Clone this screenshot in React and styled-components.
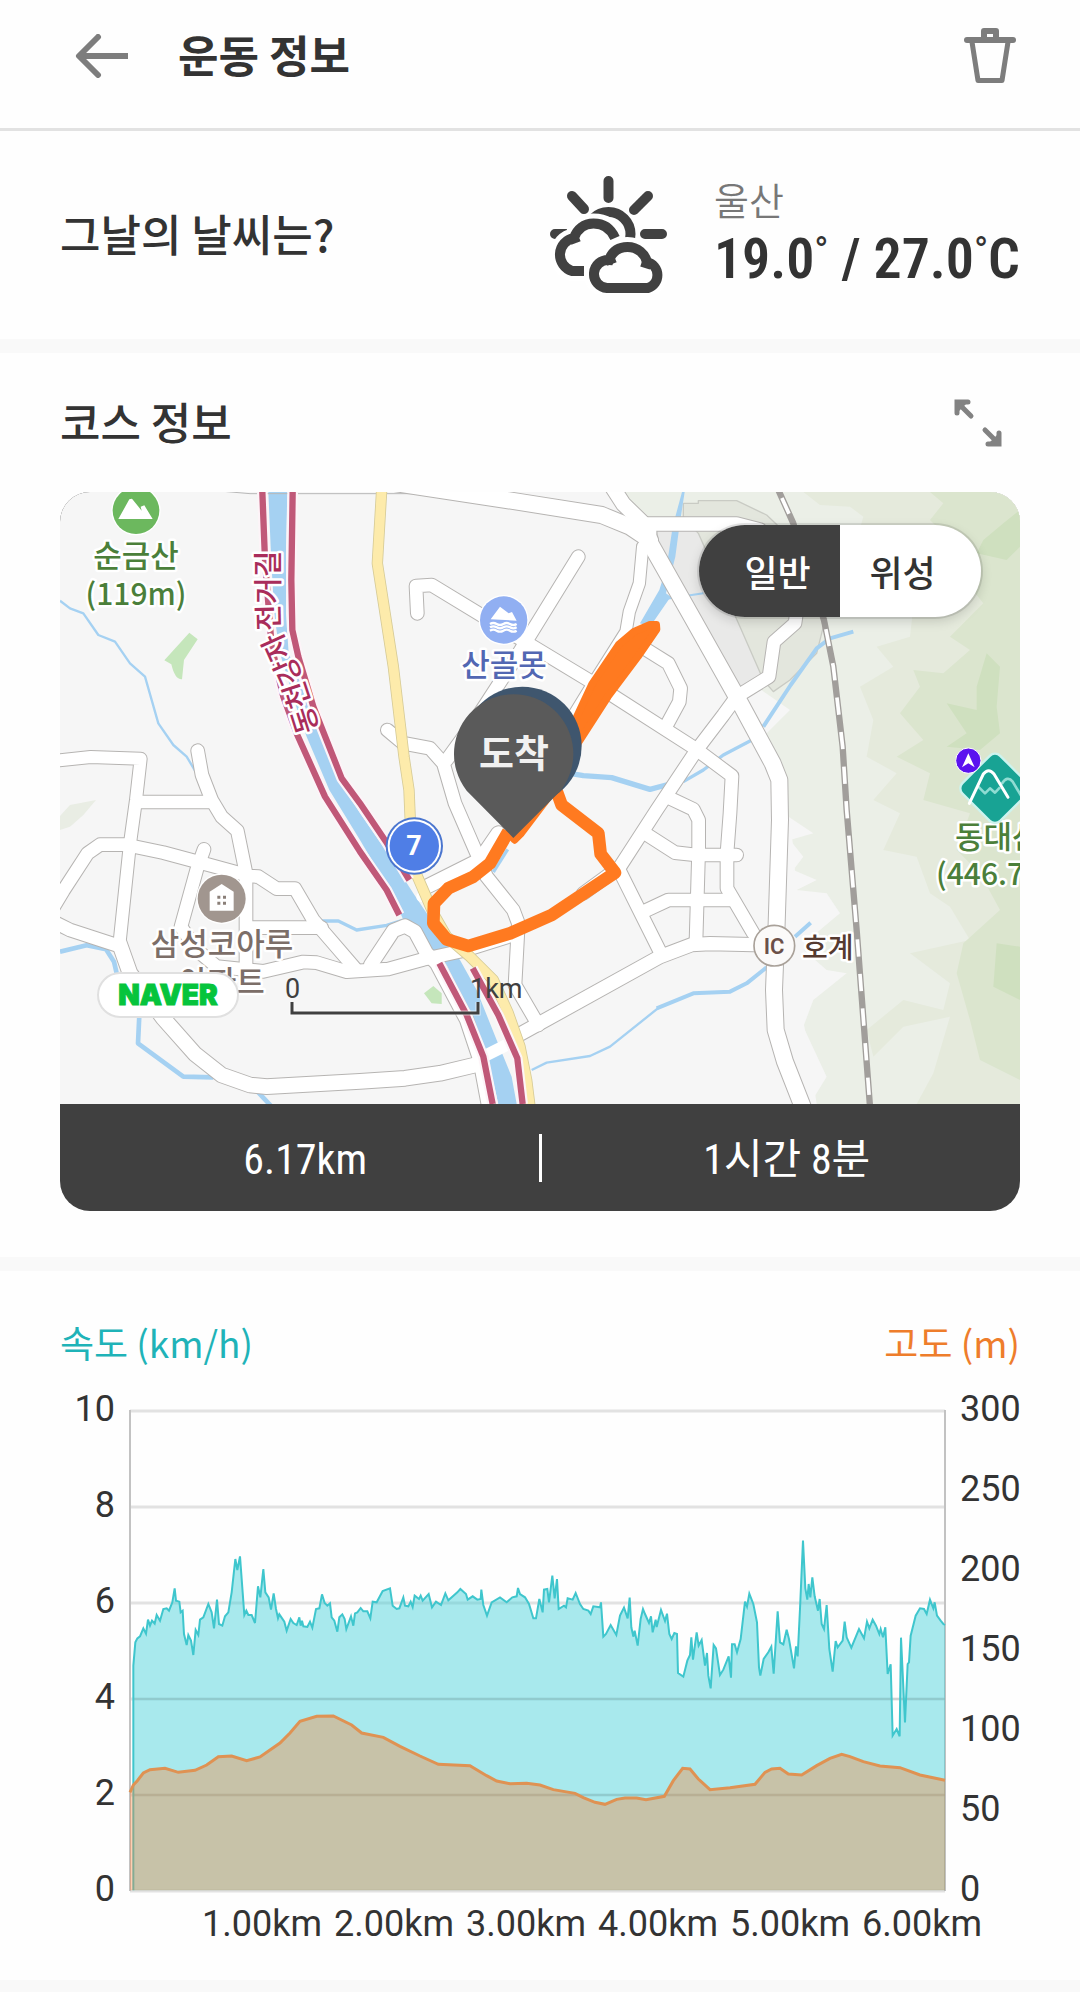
import React, { useState } from "react";
import styled, { createGlobalStyle, css } from "styled-components";

const sans = `"Noto Sans CJK KR", "Noto Sans", sans-serif`;
const narrow = `"Roboto Condensed", "Noto Sans CJK KR", sans-serif`;

const GlobalStyle = createGlobalStyle`
  *, *::before, *::after { box-sizing: border-box; }
  body { margin: 0; background: #fefefe; color: #333; font-family: ${sans}; }
  h1, h2, p { margin: 0; }
  button { margin: 0; border: 0; padding: 0; background: none; font: inherit; color: inherit; cursor: pointer; }
`;

const Page = styled.div`
  display: flex;
  flex-direction: column;
  min-height: 100vh;
`;

const Header = styled.header`
  display: flex;
  align-items: center;
  height: 131px;
  padding: 0 48px 16px 60px;
  border-bottom: 3px solid #e2e2e2;
`;

const IconButton = styled.button`
  display: flex;
  align-items: center;
  justify-content: center;
  width: 84px;
  height: 84px;
`;

const PageTitle = styled.h1`
  flex: 1;
  padding: 0 0 4px 34px;
  font-size: 44px;
  font-weight: 700;
  line-height: 64px;
`;

const SectionTitle = styled.h2`
  padding-bottom: 4px;
  font-size: 44px;
  font-weight: 500;
  line-height: 64px;
`;

const Band = styled.div`
  height: 14px;
  background: #f9f9f9;
`;

const Filler = styled(Band)`
  flex: 1;
  height: auto;
`;

const WeatherSection = styled.section`
  display: flex;
  align-items: center;
  justify-content: space-between;
  height: 208px;
  padding: 0 60px;
`;

const Weather = styled.div`
  display: flex;
  align-items: center;
  gap: 46px;
`;

const Readings = styled.div`
  padding-bottom: 8px;
`;

const City = styled.p`
  font-size: 38px;
  font-weight: 350;
  line-height: 56px;
  color: #777;
`;

const Temperature = styled.p`
  font-family: ${narrow};
  font-size: 56px;
  font-weight: 600;
  line-height: 64px;
  white-space: nowrap;
`;

const Degree = styled.span`
  font-size: 38px;
  font-weight: 400;
  line-height: 0;
  vertical-align: 14px;
`;

const CourseSection = styled.section`
  padding: 0 60px 46px;
`;

const SectionHead = styled.div`
  display: flex;
  align-items: center;
  justify-content: space-between;
  height: 139px;
`;

const MapCard = styled.div`
  overflow: hidden;
  border-radius: 30px;
  background: #404040;
`;

const MapView = styled.div`
  position: relative;
  aspect-ratio: 960 / 612;
  background: #f6f6f6;
`;

const Drawing = styled.svg`
  display: block;
  width: 100%;
  height: auto;
`;

const MapToggle = styled.div`
  position: absolute;
  top: 33px;
  right: 39px;
  display: flex;
  width: 282px;
  height: 92px;
  overflow: hidden;
  border-radius: 46px;
  background: #fff;
  box-shadow: 0 0 0 2px rgba(0, 0, 0, 0.1), 0 4px 12px rgba(0, 0, 0, 0.16);
`;

const ToggleOption = styled.button`
  flex: 1;
  font-size: 36px;
  font-weight: 500;
  line-height: 52px;
  color: #333;
  ${(p) =>
    p.$active
      ? css`
          background: #404040;
          color: #fff;
          padding-left: 16px;
        `
      : css`
          padding-right: 16px;
        `}
`;

const Attribution = styled.div`
  position: absolute;
  left: 37px;
  bottom: 86px;
  display: flex;
  align-items: center;
  justify-content: center;
  width: 142px;
  height: 46px;
  border: 2px solid #e0e0e0;
  border-radius: 23px;
  background: #fff;
  font-family: Inter, sans-serif;
  font-size: 28px;
  font-weight: 900;
  line-height: 32px;
  color: #06c43c;
  -webkit-text-stroke: 1px #06c43c;
`;

const Summary = styled.div`
  display: flex;
  align-items: center;
  height: 107px;
  color: #fff;
`;

const SummaryValue = styled.p`
  flex: 1;
  padding: 4px 0 0 12px;
  text-align: center;
  font-family: ${narrow};
  font-size: 42px;
  font-weight: 400;
  line-height: 60px;
`;

const Divider = styled.span`
  width: 3px;
  height: 48px;
  background: #fff;
`;

const ChartSection = styled.section`
  padding: 34px 60px 31px;
`;

const ChartHead = styled.div`
  display: flex;
  justify-content: space-between;
`;

const SeriesName = styled.p`
  font-size: 37px;
  font-weight: 400;
  line-height: 74px;
  color: ${(p) => p.$color};
`;

const AxisText = styled.text`
  font-family: Roboto, sans-serif;
  font-size: 36px;
  fill: #333;
`;

const PlaceText = styled.text`
  font-family: ${sans};
  font-size: ${(p) => p.$size || 31}px;
  font-weight: ${(p) => p.$weight || 500};
  fill: ${(p) => p.$color};
  stroke: #fff;
  stroke-width: ${(p) => (p.$plain ? 0 : 5)}px;
  stroke-linejoin: round;
  paint-order: stroke;
`;

const BadgeText = styled.text`
  font-family: Roboto, sans-serif;
  font-size: ${(p) => p.$size}px;
  font-weight: ${(p) => p.$weight};
  fill: ${(p) => p.$color};
`;

/* Map geometry is kept on a grid of three units to a pixel. */
const roads = [
  { w: 36, d: "M20 842L122 831L272 836L258 960L240 1090L208 1395" },
  { w: 44, d: "M208 1390L240 1480L340 1615L435 1722L515 1785L600 1815L650 1820L930 1804L1065 1795L1170 1780L1275 1755" },
  { w: 38, d: "M262 966L475 966" },
  { w: 38, d: "M443 812L456 885L485 960L515 1010L562 1052L588 1180L588 1455" },
  { w: 38, d: "M5 1290L40 1232L113 1120L150 1094L225 1094L340 1118L460 1150L600 1188L625 1190L680 1226L735 1226L790 1320L915 1465" },
  { w: 38, d: "M0 1320L60 1350L205 1397" },
  { w: 38, d: "M462 1108L440 1170L393 1340L440 1410L500 1460L640 1474L760 1446L800 1448L890 1475L1015 1467L1120 1438L1240 1412L1390 1365" },
  { w: 38, d: "M600 1343L815 1343" },
  { w: 40, d: "M962 1455L1030 1352L1065 1338L1095 1355L1130 1420L1160 1450L1250 1620L1290 1740L1318 1890" },
  { w: 48, d: "M1000 4L1370 60L1655 105L1740 140L1800 180" },
  { w: 44, d: "M1680 10L1720 72L1795 145" },
  { w: 40, d: "M1795 132L2060 132L2130 150" },
  { w: 48, d: "M1795 150L1795 180L1925 410L2060 650L2168 850L2188 900L2190 1020L2180 1330L2172 1530L2177 1650L2205 1745L2262 1890" },
  { w: 38, d: "M2240 395L2235 430L2172 485L2157 590L2060 650L2020 705L1940 810L1820 990L1710 1160L1600 1240" },
  { w: 34, d: "M1778 200L1768 310L1738 395L1728 455L1630 610L1550 740L1450 900" },
  { w: 38, d: "M1585 230L1400 530L1270 730L1190 840" },
  { w: 38, d: "M1102 400L1098 318L1145 315L1430 488L1620 603L1935 805L2046 888L2040 1000L2031 1120L2031 1225L2110 1360" },
  { w: 38, d: "M1850 950L1930 988L1946 1020L1946 1110L1938 1385" },
  { w: 38, d: "M1785 1060L1875 1118L1940 1125L2060 1125" },
  { w: 38, d: "M1780 1295L1855 1260L1930 1260L2040 1260" },
  { w: 40, d: "M1400 1668L1830 1430L1925 1394L1980 1391L2150 1395" },
  { w: 38, d: "M1775 500L1855 550L1892 625L1888 665L1845 745" },
  { w: 38, d: "M1705 1165L1835 1425" },
  { w: 38, d: "M1012 750L1060 790L1140 805L1180 850L1215 970L1280 1120L1310 1190L1390 1290L1405 1330L1395 1515L1465 1635" },
  { w: 42, d: "M1345 1060L1290 1140L1130 1220" },
];

const streams = [
  { w: 7, d: "M30 362L60 385L100 400L145 465L195 485L240 550L285 590L325 730L370 795L410 830L435 872" },
  { w: 14, d: "M30 1415L110 1396L168 1408L192 1445L200 1480M268 1605L264 1690L400 1790L490 1792M620 1832L665 1880" },
  { w: 10, d: "M815 1323L865 1323L920 1350L1010 1336L1060 1320" },
  { w: 16, d: "M1560 880L1600 887L1685 893L1800 928L1860 912" },
  { w: 10, d: "M1900 905L1960 870L2020 825L2110 778" },
  { w: 12, d: "M2140 740L2222 615L2300 505L2340 475L2410 455" },
  { w: 6, d: "M1840 358L1960 340" },
  { w: 7, d: "M1445 1770L1490 1748L1620 1728L1680 1700L1830 1580" },
  { w: 12, d: "M1820 1585L1930 1540L2040 1535L2090 1510L2150 1462M2235 1370L2282 1328" },
];

const highway =
  "M995 30L982 250L1030 560L1062 830L1077 930L1082 1050L1098 1180L1150 1300L1190 1370L1260 1430L1330 1500L1375 1600L1410 1700L1430 1800L1440 1880";

const railway = "M2185 30L2230 130L2322 420L2350 560L2378 800L2390 990L2420 1350L2460 1880";

const cyclePaths = [
  "M728 36L724 300L727 450L745 530L790 680L875 895L930 970L1008 1085L1078 1200",
  "M637 36L645 240L665 500L700 650L742 765L825 950L930 1115L1010 1230L1048 1305",
  "M1168 1450L1250 1605L1300 1730L1328 1872",
  "M1268 1465L1345 1605L1402 1735L1418 1872",
];

const speedLine =
  "250,860 256,790 262,778 270,772 280,748 288,764 294,722 300,740 306,725 314,734 320,708 330,725 340,690 350,688 357,695 367,670 374,628 378,665 388,668 392,700 398,695 402,765 410,798 415,768 423,785 430,828 437,753 445,768 450,722 460,715 475,675 485,700 492,748 501,662 507,735 517,740 525,712 535,700 545,640 556,540 562,573 570,532 578,640 583,708 589,695 595,708 605,708 615,732 624,622 631,655 640,570 646,640 656,655 663,692 671,643 678,690 684,718 688,706 703,728 710,755 722,720 730,732 740,738 748,715 752,740 756,725 760,742 772,744 780,728 787,746 798,690 808,688 816,646 824,672 832,680 840,673 845,715 853,725 862,758 868,715 877,706 884,720 889,750 903,712 910,740 915,703 922,700 932,687 940,697 952,697 961,718 968,668 980,670 998,636 1020,628 1028,680 1040,690 1048,688 1060,655 1065,680 1075,682 1082,668 1088,684 1094,650 1107,660 1112,650 1118,665 1136,645 1146,685 1158,668 1173,678 1186,643 1195,664 1222,640 1231,630 1248,645 1253,662 1268,652 1282,662 1292,660 1294,632 1300,678 1311,710 1325,670 1350,655 1370,670 1387,655 1400,652 1404,627 1410,645 1425,655 1437,675 1450,718 1458,718 1468,660 1478,700 1482,632 1492,630 1497,670 1507,590 1514,658 1521,600 1526,690 1542,680 1548,685 1553,658 1568,662 1577,642 1590,675 1600,690 1615,695 1622,705 1630,682 1650,685 1653,670 1660,773 1668,765 1682,738 1699,768 1710,710 1722,686 1733,718 1739,656 1744,745 1750,773 1754,755 1763,800 1772,720 1779,690 1785,705 1797,732 1803,712 1808,760 1817,722 1820,744 1833,693 1845,726 1851,704 1858,765 1865,780 1873,762 1881,765 1884,882 1900,893 1912,845 1920,828 1924,775 1929,842 1940,760 1946,800 1955,783 1965,860 1971,822 1975,890 1982,928 1991,798 1998,808 2010,888 2020,872 2036,832 2043,896 2046,796 2054,796 2061,820 2072,780 2085,668 2091,683 2098,644 2110,675 2121,730 2127,865 2131,890 2141,840 2155,820 2164,803 2171,884 2183,697 2190,790 2200,796 2210,752 2217,780 2232,868 2238,802 2243,832 2250,690 2259,485 2266,628 2272,662 2276,615 2281,655 2287,595 2294,652 2304,695 2309,660 2315,735 2322,750 2330,678 2338,810 2348,878 2357,786 2363,805 2378,785 2384,728 2390,775 2404,806 2427,750 2442,778 2451,728 2458,748 2468,722 2478,740 2488,765 2492,750 2499,775 2506,745 2513,885 2522,856 2528,1070 2540,1050 2549,1072 2553,776 2565,1030 2573,855 2577,850 2582,770 2597,710 2610,688 2622,690 2630,705 2640,662 2650,688 2654,670 2661,710 2672,725 2680,735 2685,738";

const elevationLine =
  "240,1240 250,1218 262,1205 280,1182 300,1172 345,1168 385,1180 435,1174 470,1158 505,1133 545,1131 590,1145 630,1134 690,1092 720,1062 750,1027 800,1012 850,1011 905,1038 935,1062 1000,1075 1050,1102 1110,1131 1165,1156 1260,1160 1310,1190 1340,1206 1380,1214 1430,1213 1470,1218 1510,1232 1575,1243 1600,1256 1635,1270 1665,1276 1700,1261 1725,1257 1760,1257 1788,1262 1843,1252 1870,1205 1898,1168 1920,1170 1945,1200 1980,1232 2040,1226 2115,1216 2145,1180 2165,1170 2190,1168 2215,1185 2255,1188 2300,1160 2340,1138 2375,1126 2400,1133 2440,1148 2490,1161 2550,1166 2610,1188 2685,1204";

const BackIcon = () => (
  <svg width="54" height="44" viewBox="0 0 54 44" fill="none" stroke="#7d7d7d" strokeWidth="6" aria-hidden="true">
    <path d="M53 22H6" />
    <path d="M23 3L4 22L23 41" strokeLinecap="round" strokeLinejoin="round" strokeWidth="6" />
  </svg>
);

const TrashIcon = () => (
  <svg width="52" height="56" viewBox="0 0 52 56" fill="none" stroke="#7d7d7d" aria-hidden="true">
    <path d="M3 12H49" strokeWidth="6" strokeLinecap="round" />
    <path d="M20 11V3H32V11" strokeWidth="6" strokeLinejoin="round" />
    <path d="M8 14L14 52.500H38L44 14" strokeWidth="5" strokeLinejoin="round" />
  </svg>
);

const ExpandIcon = () => (
  <svg width="48" height="48" viewBox="0 0 48 48" fill="none" stroke="#828282" strokeWidth="5" strokeLinecap="round" aria-hidden="true">
    <path d="M3 14V3H14M4 4L17 17M45 34V45H34M44 44L31 31" />
    <path d="M2 2H15L2 15ZM46 46H33L46 33Z" fill="#828282" stroke="none" />
  </svg>
);

const WeatherIcon = () => (
  <svg width="118" height="118" viewBox="0 0 118 118" fill="none" stroke="#414141" strokeWidth="10" role="img" aria-label="구름 많음">
    <g strokeLinecap="round">
      <path d="M58.500 5V22M22 20L34 33M98 20L84 34M95 58H112M5 58H20" />
    </g>
    <circle cx="58.500" cy="58" r="22" />
    <path d="M34 95H22A17 17 0 0 1 24 62C27 53 34 47.500 43.500 47.500C54 47.500 61 52 65 61L66 95Z" fill="#fff" stroke="#fff" strokeWidth="20" />
    <path d="M34 95H22A17 17 0 0 1 24 62C27 53 34 47.500 43.500 47.500C54 47.500 61 53 65 62M24 62L26 67" />
    <path d="M57 112A14 14 0 0 1 59 84C62 76 68 71 77.500 71C88 71 95 78 97 86A13.500 13.500 0 0 1 98 112Z" fill="#fff" stroke="#fff" strokeWidth="20" />
    <path d="M57 112A14 14 0 0 1 59 84C62 76 68 71 77.500 71C88 71 95 78 97 86A13.500 13.500 0 0 1 98 112Z" fill="#fff" />
    <path d="M60 83L62 88M97 86L95 92" />
  </svg>
);

const Terrain = () => (
  <g>
    <path fill="#ebefe7" d="M1710 36H2910V1872H2300L2275 1700L2255 1600L2290 1500L2250 1440L2290 1330L2240 1250L2230 1100L2200 900L2150 760L2220 690L2120 620L1900 200Z" />
    <path fill="#f6f6f6" d="M2200 1000L2290 1060L2220 1080L2260 1130L2230 1170L2300 1200L2240 1230L2330 1240L2370 1300L2250 1400L2330 1470L2390 1480L2290 1560L2260 1640L2330 1790L2280 1872H2190Z" />
    <path fill="#e5eadc" d="M2260 36L2310 75L2400 80L2440 110L2400 250L2480 350L2590 380L2580 470L2480 500L2530 560L2430 620L2470 720L2450 830L2540 880L2470 960L2550 1000L2500 1110L2600 1130L2640 1240L2700 1280L2760 1380L2580 1420L2700 1510L2680 1590L2560 1560L2450 1650L2470 1730L2560 1640L2700 1610L2650 1780L2600 1872H2910V36Z" />
    <path fill="#dbe5ce" d="M2640 36L2680 70L2640 120L2700 180L2770 200L2760 320L2800 370L2700 470L2760 510L2680 580L2590 570L2610 620L2550 700L2620 780L2540 830L2640 880L2620 960L2760 1000L2720 1110L2790 1180L2850 1290L2740 1390L2720 1480L2760 1620L2790 1740L2910 1800V36Z" />
    <path fill="#cfe0bf" d="M2910 90L2860 130L2800 180L2780 220L2870 240L2910 200ZM2810 520L2780 620L2780 690L2690 670L2750 760L2690 800L2790 810L2850 760L2840 680L2850 560ZM2840 1390L2830 1520L2910 1560V1400Z" />
    <path fill="#e9e9e8" stroke="#cfcfcd" strokeWidth="3" d="M1820 150L2070 150L2240 240L2240 430L2140 600L2070 630L1830 210Z" />
    <path fill="#e3e6dd" stroke="#c9cbc4" strokeWidth="4" d="M1900 70H1945V62L2060 62L2150 105L2250 200L2320 440L2300 520L2220 600L2170 635L2140 600L2070 440L1945 160L1900 110Z" />
    <path fill="#c5e6bb" d="M418 458L443 478L402 540L396 598Q375 600 364 553L343 541Z" />
    <path fill="#c5e6bb" d="M1122 1540L1150 1518L1175 1540V1572L1145 1570Z" />
    <path fill="#e9ede4" d="M30 1008L60 975L138 960L100 1005L60 1040L30 1050Z" />
  </g>
);

const MapDrawing = () => (
  <Drawing viewBox="0 0 960 612" role="img" aria-label="코스 지도">
    <defs>
      <path id="bikeway" d="M259 238C250 212 246 192 234 168C226 152 219 140 219 124L219 36" />
    </defs>
    <g transform="scale(0.33333) translate(-30 -36)" fill="none" strokeLinejoin="round">
      <Terrain />
      {streams.map((s) => (
        <path key={s.d} d={s.d} stroke="#a5d1f2" strokeWidth={s.w} />
      ))}
      <path fill="#a5d1f2" d="M1896 36L1868 140L1850 260L1828 330L1770 430L1800 440L1862 350L1848 340L1876 230L1888 140L1904 36Z" />
      <path fill="#a5d1f2" d="M655 36L662 200L672 400L690 520L745 700L770 770L838 930L930 1080L1030 1250L1060 1320L1110 1370L1190 1455L1260 1600L1310 1720L1345 1872H1400L1385 1790L1340 1680L1280 1530L1230 1440L1180 1380L1130 1300L1090 1240L1000 1100L930 1000L885 930L830 820L790 720L755 620L716 520L708 400L708 200L712 36Z" />
      <path d="M520 34L600 41H1100" stroke="#b8b8b8" strokeWidth="3" />
      {roads.map((r) => (
        <path key={r.d} d={r.d} stroke="#b6b4b2" strokeWidth={r.w + 6} strokeLinecap="round" />
      ))}
      {roads.map((r) => (
        <path key={r.d} d={r.d} stroke="#fff" strokeWidth={r.w} strokeLinecap="round" />
      ))}
      <circle cx="1115" cy="1250" r="16" fill="#fff" />
      <path d="M1300 1730L1390 1685" stroke="#fff" strokeWidth="36" />
      <path d={highway} stroke="#d6cb97" strokeWidth="34" />
      <path d={highway} stroke="#fdebab" strokeWidth="29" />
      {cyclePaths.map((d) => (
        <g key={d}>
          <path d={d} stroke="#fdf4f8" strokeWidth="32" />
          <path d={d} stroke="#c05878" strokeWidth="19" />
        </g>
      ))}
      <path d={railway} stroke="#a19e9b" strokeWidth="19" />
      <path d={railway} stroke="#fff" strokeWidth="11" strokeDasharray="52 52" strokeDashoffset="-26" />
      <path d="M1373 1108L1330 1176" stroke="#a5d1f2" strokeWidth="10" />
      <path fill="#ff7a20" stroke="#ff7a20" strokeWidth="22" d="M1752 455L1800 434L1819 434L1820 448L1764 530L1674 650L1584 790L1512 930L1412 1062L1394 1080L1375 1060L1500 900L1578 715L1626 612L1706 494Z" />
      <path stroke="#ff7a20" strokeWidth="38" d="M1375 1055L1320 1150L1270 1190L1195 1225L1152 1270L1150 1330L1190 1378L1255 1398L1380 1360L1505 1305L1695 1178L1652 1122L1645 1060L1535 975L1515 920" />
      <circle cx="1417" cy="798" r="178" fill="#3f566e" />
      <path fill="#5a5a5a" d="M1250 932A179 179 0 1 1 1532 932L1390 1074Z" />

      <circle cx="258" cy="92" r="74" fill="#fff" />
      <circle cx="258" cy="92" r="70" fill="#6cb85e" />
      <path fill="#fff" d="M205 117L238 58L246 56L275 92L272 80L283 76L308 117Z" />

      <circle cx="1361" cy="420" r="75" fill="#fff" />
      <circle cx="1361" cy="420" r="71" fill="#91aff2" />
      <path fill="#fff" d="M1322 418L1350 380L1376 400L1386 396L1400 422Z" />
      <path stroke="#fff" strokeWidth="7" d="M1320 432q10 -6 20 0t20 0t20 0t20 0M1320 442q10 -6 20 0t20 0t20 0t20 0M1320 452q10 -6 20 0t20 0t20 0t20 0" />

      <circle cx="1093" cy="1098" r="86" fill="#4b76cf" />
      <circle cx="1093" cy="1098" r="80" fill="#fff" />
      <circle cx="1093" cy="1098" r="74" fill="#4f7ee6" />

      <circle cx="515" cy="1256" r="76" fill="#fff" />
      <circle cx="515" cy="1256" r="72" fill="#a1968f" />
      <path fill="#fff" d="M479 1292V1235L515 1212L551 1235V1292Z" />
      <path fill="#8a7f78" d="M502 1247h9v9h-9zM519 1247h9v9h-9zM502 1265h9v9h-9zM519 1265h9v9h-9z" />

      <circle cx="2173" cy="1397" r="61" fill="#fbfaf9" stroke="#a9a199" strokeWidth="5" />
    </g>

    <g textAnchor="middle">
      <PlaceText x="76" y="75" $color="#4b7f3a">순금산</PlaceText>
      <PlaceText x="76" y="113" $size="30" $color="#4b7f3a">(119m)</PlaceText>
      <PlaceText x="444" y="184" $color="#5267b3">산골못</PlaceText>
      <PlaceText x="162" y="463" $color="#7c6e68">삼성코아루</PlaceText>
      <PlaceText x="162" y="501" $color="#7c6e68">아파트</PlaceText>
      <PlaceText x="454" y="275" $size="38" $weight="700" $color="#f1f1f1" $plain>도착</PlaceText>
      <BadgeText x="354" y="363" $size="27" $weight="700" $color="#fff">7</BadgeText>
      <BadgeText x="714" y="462" $size="22" $weight="600" $color="#6b5048">IC</BadgeText>
    </g>
    <PlaceText x="742" y="466" $size="28" $color="#553a30">호계</PlaceText>
    <PlaceText x="895" y="356" $color="#4b7f3a">동대산</PlaceText>
    <PlaceText x="876" y="393" $size="30" $color="#4b7f3a">(446.7m)</PlaceText>
    <g transform="scale(0.33333) translate(-30 -36)" fill="none" strokeLinejoin="round">
      <rect x="2755" y="845" width="160" height="160" rx="22" transform="rotate(45 2835 925)" fill="#18a394" stroke="#cdf3ee" strokeWidth="7" />
      <path stroke="#8fdcd2" strokeWidth="8" d="M2785 920L2805 940L2820 925L2835 938L2850 922M2855 912Q2872 885 2888 905L2915 950" />
      <path stroke="#fff" strokeWidth="9" strokeLinecap="round" d="M2758 970L2800 882Q2816 862 2832 882L2874 952" />
      <circle cx="2755" cy="842" r="38" fill="#5b12ef" stroke="#fff" strokeWidth="3" />
      <path fill="#fff" d="M2755 820L2774 862L2755 850L2736 862Z" />
    </g>
    <PlaceText $size="29" $color="#a92d5b">
      <textPath href="#bikeway">동천강자전거길</textPath>
    </PlaceText>
    <path d="M232 510V521H418V510" fill="none" stroke="#fff" strokeWidth="5" opacity="0.6" />
    <path d="M232 510V521H418V510" fill="none" stroke="#404040" strokeWidth="3" />
    <BadgeText x="225" y="506" $size="27" $weight="400" $color="#404040">0</BadgeText>
    <BadgeText x="410" y="506" $size="27" $weight="400" $color="#404040">1km</BadgeText>
  </Drawing>
);

const Chart = () => (
  <Drawing viewBox="0 0 960 570" role="img" aria-label="속도와 고도 그래프">
    {[32, 128, 224, 320, 416, 512].map((y) => (
      <path key={y} d={`M70 ${y}H885`} stroke="#e2e2e2" strokeWidth="3" />
    ))}
    <path d="M70 31V512M885 31V512" stroke="#c2c2c2" strokeWidth="2" />
    <g transform="scale(0.33333) translate(-30 0)" fill="none">
      <polygon points={`250,1534 ${speedLine} 2685,1534`} fill="#37ced7" fillOpacity="0.43" />
      <g stroke="#7a9a9c" strokeOpacity="0.22" strokeWidth="6">
        <path d="M250 960H2685M250 1248H2685" />
      </g>
      <polyline points={`250,1534 ${speedLine}`} stroke="#3fc6cd" strokeWidth="6" />
      <polygon points={`240,1534 ${elevationLine} 2685,1534`} fill="#ff7e2e" fillOpacity="0.36" />
      <polyline points={elevationLine} stroke="#df9253" strokeWidth="9" />
    </g>
    <g textAnchor="end">
      {[10, 8, 6, 4, 2, 0].map((v, i) => (
        <AxisText key={v} x="55" y={42 + i * 96}>{v}</AxisText>
      ))}
    </g>
    {[300, 250, 200, 150, 100, 50, 0].map((v, i) => (
      <AxisText key={v} x="900" y={42 + i * 80}>{v}</AxisText>
    ))}
    <g textAnchor="middle">
      {[1, 2, 3, 4, 5, 6].map((v, i) => (
        <AxisText key={v} x={202 + i * 132} y="557">{`${v}.00km`}</AxisText>
      ))}
    </g>
  </Drawing>
);

export default function App() {
  const [layer, setLayer] = useState("일반");
  return (
    <Page>
      <GlobalStyle />
      <Header>
        <IconButton type="button" aria-label="뒤로"><BackIcon /></IconButton>
        <PageTitle>운동 정보</PageTitle>
        <IconButton type="button" aria-label="삭제"><TrashIcon /></IconButton>
      </Header>
      <WeatherSection>
        <SectionTitle>그날의 날씨는?</SectionTitle>
        <Weather>
          <WeatherIcon />
          <Readings>
            <City>울산</City>
            <Temperature>
              19.0<Degree>°</Degree> / 27.0<Degree>°</Degree>C
            </Temperature>
          </Readings>
        </Weather>
      </WeatherSection>
      <Band />
      <CourseSection>
        <SectionHead>
          <SectionTitle>코스 정보</SectionTitle>
          <IconButton type="button" aria-label="지도 확대"><ExpandIcon /></IconButton>
        </SectionHead>
        <MapCard>
          <MapView>
            <MapDrawing />
            <MapToggle>
              {["일반", "위성"].map((name) => (
                <ToggleOption key={name} type="button" $active={layer === name} aria-pressed={layer === name} onClick={() => setLayer(name)}>
                  {name}
                </ToggleOption>
              ))}
            </MapToggle>
            <Attribution>NAVER</Attribution>
          </MapView>
          <Summary>
            <SummaryValue>6.17km</SummaryValue>
            <Divider />
            <SummaryValue>1시간 8분</SummaryValue>
          </Summary>
        </MapCard>
      </CourseSection>
      <Band />
      <ChartSection>
        <ChartHead>
          <SeriesName $color="#1fb3b8">속도 (km/h)</SeriesName>
          <SeriesName $color="#ee7d2b">고도 (m)</SeriesName>
        </ChartHead>
        <Chart />
      </ChartSection>
      <Filler />
    </Page>
  );
}
